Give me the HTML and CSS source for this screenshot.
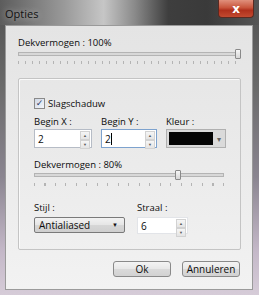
FILE: index.html
```html
<!DOCTYPE html>
<html lang="nl">
<head>
    <meta charset="UTF-8">
    <title>Opties</title>
    <link rel="stylesheet" href="styles.css">
</head>
<body>
    <div class="window">
        <div class="titlebar">
            <span class="title">Opties</span>
            <button class="close">x</button>
        </div>
        <div class="client">
            <div class="label">Dekvermogen : 100%</div>
            <div class="slider wide">
                <div class="track"><span class="thumb" style="left: 100%"></span></div>
                <div class="ticks"></div>
            </div>

            <div class="group">
                <label class="check"><span class="box">&#10003;</span>Slagschaduw</label>

                <div class="row">
                    <div class="field">
                        <div class="label">Begin X :</div>
                        <div class="spin"><span class="value">2</span><span class="arrows"><i>&#9650;</i><i>&#9660;</i></span></div>
                    </div>
                    <div class="field">
                        <div class="label">Begin Y :</div>
                        <div class="spin focus"><span class="value">2<b class="caret"></b></span><span class="arrows"><i>&#9650;</i><i>&#9660;</i></span></div>
                    </div>
                    <div class="field">
                        <div class="label">Kleur :</div>
                        <div class="color"><span class="swatch"></span><span class="drop">&#9662;</span></div>
                    </div>
                </div>

                <div class="label">Dekvermogen : 80%</div>
                <div class="slider inner">
                    <div class="track"><span class="thumb" style="left: 77%"></span></div>
                    <div class="ticks"></div>
                </div>

                <div class="row bottom">
                    <div class="field">
                        <div class="label">Stijl :</div>
                        <div class="combo"><span>Antialiased</span><span class="arrow">&#9660;</span></div>
                    </div>
                    <div class="field">
                        <div class="label">Straal :</div>
                        <div class="spin small"><span class="value">6</span><span class="arrows"><i>&#9650;</i><i>&#9660;</i></span></div>
                    </div>
                </div>
            </div>

            <div class="actions">
                <button class="btn">Ok</button>
                <button class="btn">Annuleren</button>
            </div>
        </div>
    </div>
</body>
</html>
```

FILE: styles.css
```css
* {
    box-sizing: border-box;
}

body {
    margin: 0;
    width: 259px;
    height: 295px;
    overflow: hidden;
    font-family: 'Open Sans', 'Noto Sans', Arial, sans-serif;
    font-size: 9.5px;
    color: #0c0c0c;
}

.window {
    width: 259px;
    height: 295px;
    padding: 0 6px 5px 5px;
    display: flex;
    flex-direction: column;
    background: linear-gradient(180deg, #505050 0%, #6b6b6b 30%, #8a8590 60%, #c4b8c8 85%, #d6ccd8 100%);
}

.titlebar {
    height: 25px;
    margin: 0 -6px 0 -5px;
    padding: 0 6px 0 5px;
    display: flex;
    align-items: flex-start;
    justify-content: space-between;
    background: linear-gradient(90deg, #5c5c5c 0%, #7a7a7a 12%, #9a9a9a 25%, #c6c6c6 40%, #8a8a8a 52%, #3e3e3e 65%, #3a3a3a 80%, #555 100%);
}

.title {
    padding-top: 6px;
    font-size: 11px;
    color: #111;
    text-shadow: 0 0 6px rgba(255,255,255,0.6);
}

.close {
    width: 36px;
    height: 18px;
    margin-right: -1px;
    border: 1px solid #5a2a22;
    border-top: none;
    border-radius: 0 0 4px 4px;
    background: linear-gradient(180deg, #e0907c 0%, #c8553c 45%, #b0301c 60%, #c24a30 100%);
    color: #fff;
    font: bold 12px 'DejaVu Sans', sans-serif;
    line-height: 14px;
    padding: 0;
}

.client {
    flex: 1;
    background: linear-gradient(180deg, #e4e4e4 0%, #ececec 60%, #f2f2f2 100%);
    border: 1px solid #9a9a9a;
    padding: 11px 11px 0 12px;
    display: flex;
    flex-direction: column;
}

.label {
    font-size: 9.5px;
    line-height: 12px;
}

.slider .track {
    position: relative;
    height: 4px;
    margin-top: 3px;
    background: #d8d8d8;
    border: 1px solid #b4b4b4;
}

.slider .thumb {
    position: absolute;
    top: -4px;
    width: 6px;
    height: 10px;
    margin-left: -5px;
    border: 1px solid #8a8a8a;
    border-radius: 1px;
    background: linear-gradient(180deg, #f6f6f6, #d6d6d6);
}

.slider .ticks {
    height: 3px;
    margin-top: 5px;
    background: repeating-linear-gradient(90deg, #b4b4b4 0 1px, transparent 1px 7px);
}

.group {
    margin-top: 14px;
    height: 172px;
    border: 1px solid #c4c4c4;
    border-radius: 2px;
    box-shadow: inset 1px 1px 0 #fafafa;
    padding: 18px 16px 0 15px;
}

.check {
    display: flex;
    align-items: center;
    gap: 3px;
    height: 12px;
}

.check .box {
    width: 11px;
    height: 11px;
    border: 1px solid #8a8a8a;
    background: linear-gradient(135deg, #cfd8e6, #f4f6fa);
    color: #2a3c6a;
    font: bold 9px 'DejaVu Sans', sans-serif;
    line-height: 9px;
    text-align: center;
}

.row {
    display: flex;
    gap: 9px;
    margin-top: 7px;
}

.row .label {
    margin-bottom: 1px;
}

.spin {
    width: 58px;
    height: 19px;
    border: 1px solid #b6bcc6;
    background: #fff;
    display: flex;
    justify-content: space-between;
}

.spin.focus {
    width: 56px;
    border-color: #7da2ce;
}

.spin .value {
    padding: 2px 0 0 3px;
    font-size: 10px;
}

.caret {
    display: inline-block;
    width: 1px;
    height: 12px;
    background: #000;
    vertical-align: -2px;
}

.spin .arrows {
    width: 10px;
    display: flex;
    flex-direction: column;
    margin: 1px;
}

.spin .arrows i {
    flex: 1;
    font-style: normal;
    font-size: 4px;
    line-height: 7px;
    text-align: center;
    color: #5a5a5a;
    background: linear-gradient(180deg, #f6f6f6, #e4e4e4);
    border: 1px solid #d2d2d2;
}

.color {
    width: 60px;
    height: 19px;
    border: 1px solid #b0b0b0;
    background: #dadada;
    display: flex;
    padding: 2px 0 2px 2px;
}

.color .swatch {
    flex: 1;
    background: #050505;
}

.color .drop {
    width: 12px;
    text-align: center;
    font-size: 8px;
    line-height: 13px;
    color: #666;
}

.group > .label {
    margin-top: 11px;
}

.slider.inner .track {
    margin-top: 2px;
}

.slider.inner .ticks {
    margin-top: 6px;
    background: repeating-linear-gradient(90deg, #b4b4b4 0 1px, transparent 1px 10.5px);
}

.row.bottom {
    margin-top: 16px;
    gap: 12px;
}

.row.bottom .label {
    margin-bottom: 3px;
}

.combo {
    width: 91px;
    height: 16px;
    border: 1px solid #7a7a7a;
    border-radius: 2px;
    background: linear-gradient(180deg, #f2f2f2 0%, #e6e6e6 48%, #d6d6d6 52%, #cfcfcf 100%);
    display: flex;
    align-items: center;
    justify-content: space-between;
    padding: 0 6px 0 4px;
    font-size: 10px;
}

.combo .arrow {
    font-size: 6px;
    color: #111;
}

.spin.small {
    width: 51px;
    height: 17px;
    border-color: #e2e4e8;
}

.spin.small .value {
    padding-top: 1px;
}

.actions {
    display: flex;
    justify-content: flex-end;
    gap: 11px;
    margin-top: 11px;
    padding-right: 1px;
}

.btn {
    width: 58px;
    height: 16px;
    padding: 0;
    border: 1px solid #8a8a8a;
    border-radius: 3px;
    background: linear-gradient(180deg, #f4f4f4 0%, #e8e8e8 48%, #dadada 52%, #d2d2d2 100%);
    font-family: 'Open Sans', 'Noto Sans', Arial, sans-serif;
    font-size: 10px;
    line-height: 13px;
    color: #0c0c0c;
}
```
